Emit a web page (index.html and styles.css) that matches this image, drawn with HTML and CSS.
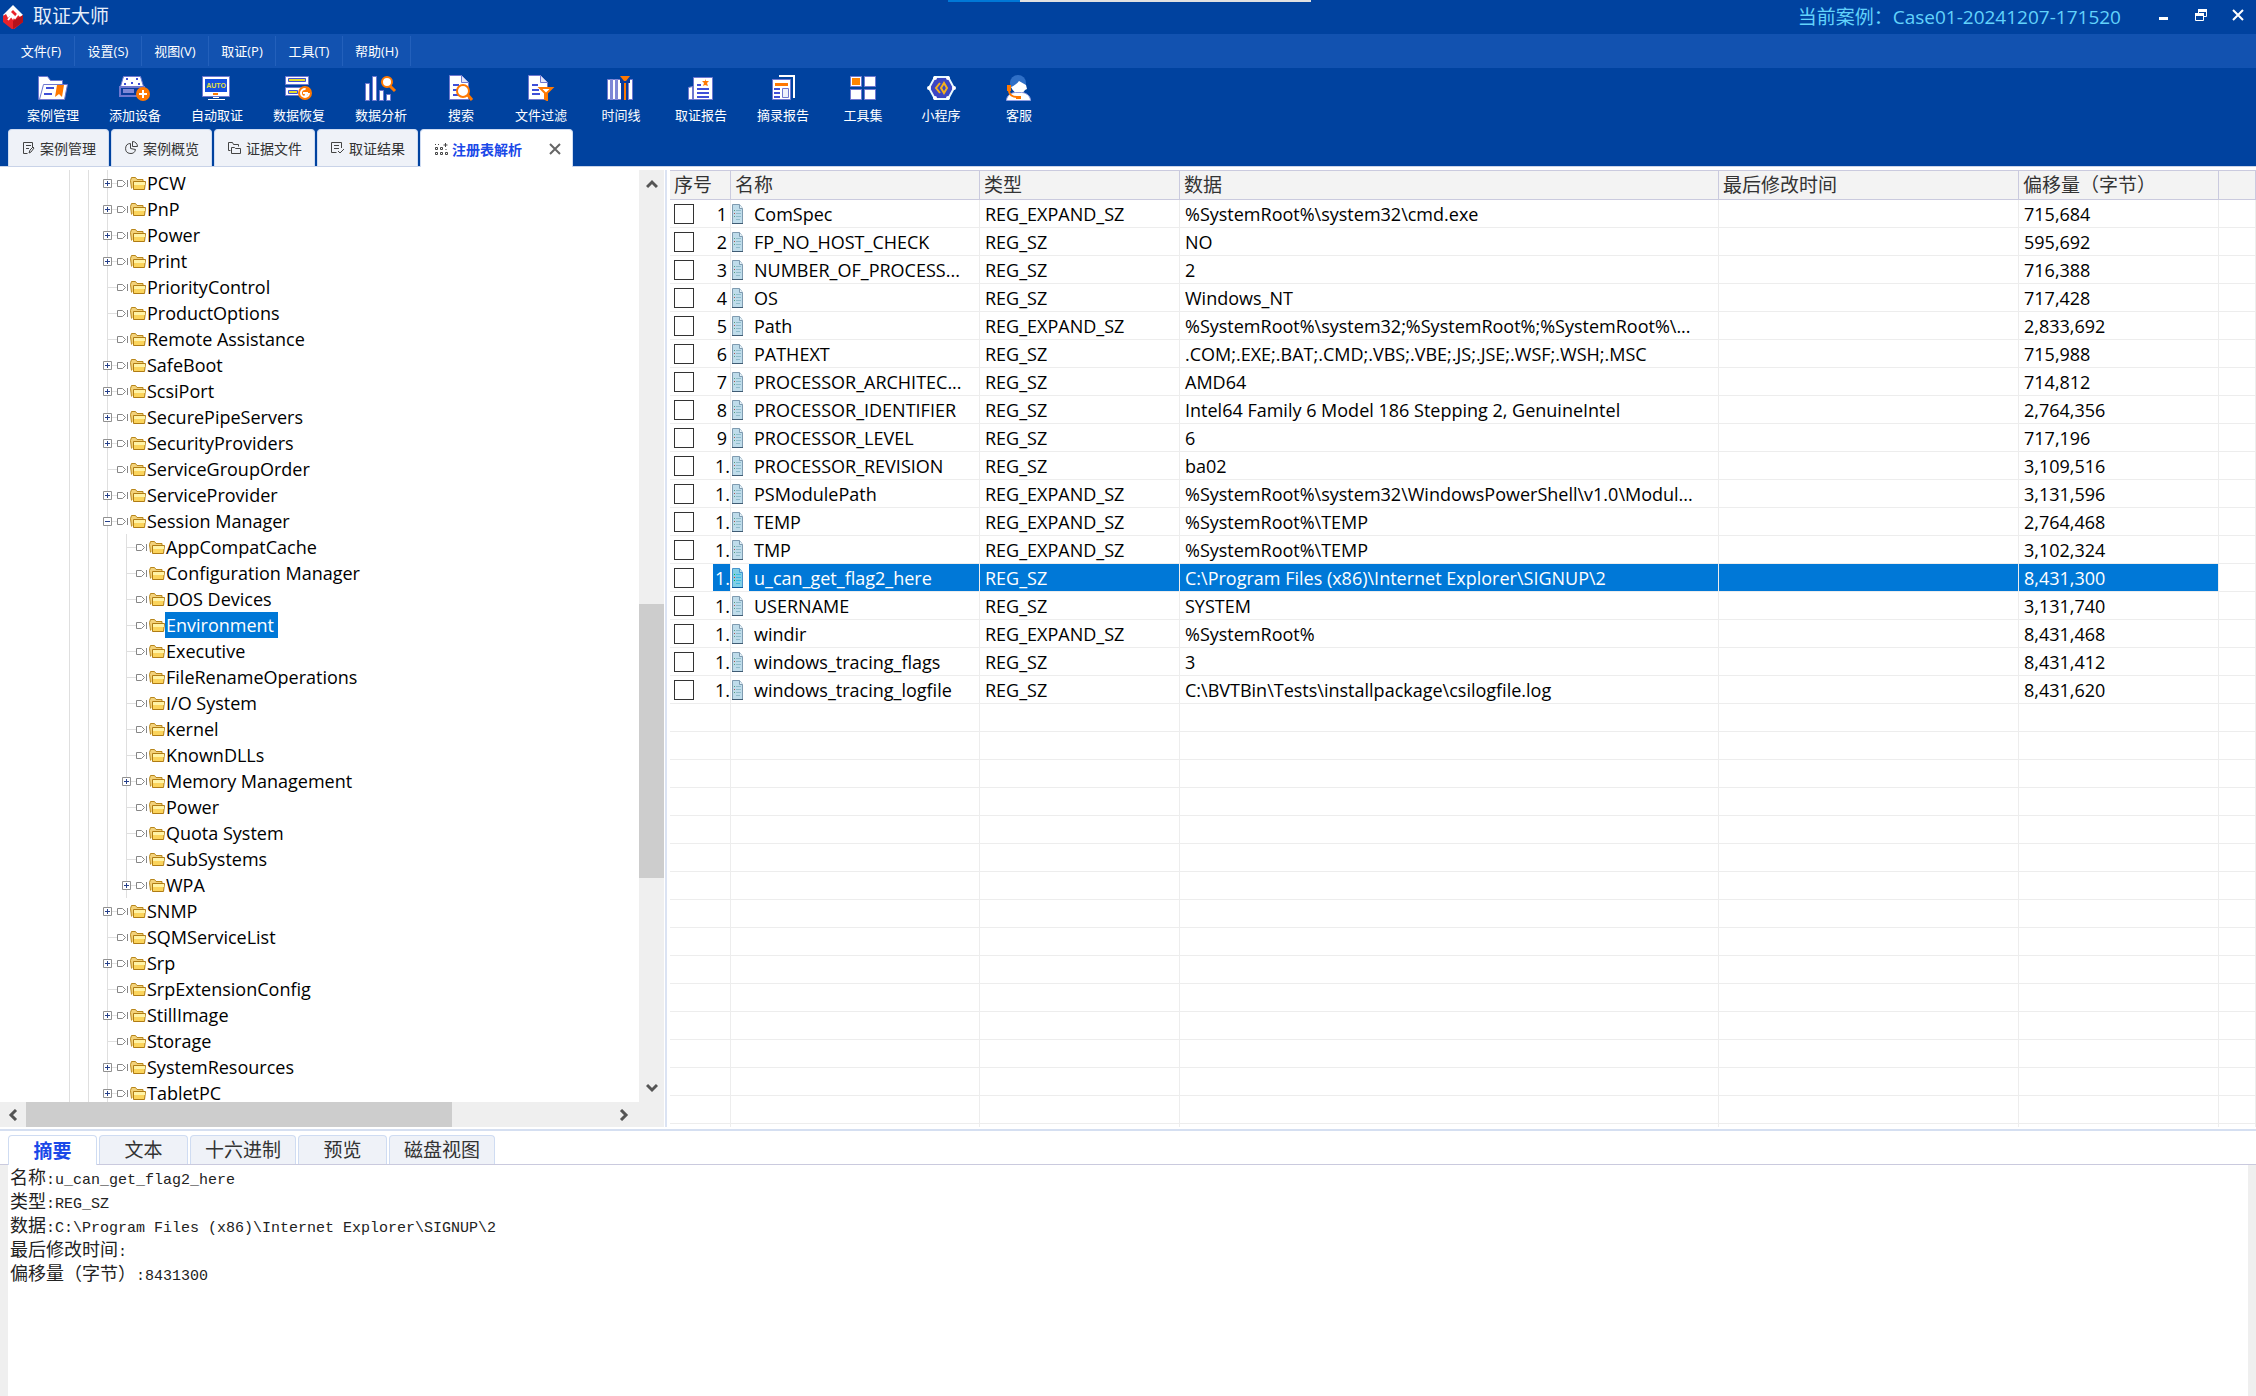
FILE: index.html
```
<!DOCTYPE html>
<html lang="zh-CN">
<head>
    <meta charset="UTF-8">
    <meta name="viewport" content="width=device-width, initial-scale=1.0">
    <title>取证大师</title>
    <link rel="stylesheet" href="styles.css">
</head>
<body>
    <!-- Shared icons -->
    <svg class="sprite" aria-hidden="true">
        <symbol id="i-plus" viewBox="0 0 9 9">
            <path fill="#fff" stroke="#919191" d="M.5.5h8v8h-8z"/>
            <path fill="none" stroke="#26408a" d="M2 4.500h5M4.500 2v5"/>
        </symbol>
        <symbol id="i-minus" viewBox="0 0 9 9">
            <path fill="#fff" stroke="#919191" d="M.5.5h8v8h-8z"/>
            <path fill="none" stroke="#26408a" d="M2 4.500h5"/>
        </symbol>
        <symbol id="i-tag" viewBox="0 0 12 9">
            <path fill="#fff" stroke="#868686" d="M.5 1.500h5l3 3-3 3h-5zM10.500 1v7"/>
        </symbol>
        <symbol id="i-folder" viewBox="0 0 16 14">
            <path fill="#f3d27a" stroke="#b8861b" d="M1.500 12.500L.5 4.500l1-3h4l1.500 2h6v3"/>
            <path fill="#fbd45c" stroke="#b07c14" d="M3.500 5.500h12l-1 8h-11z"/>
            <path fill="#fff3a6" d="M4 6h11v3H4z"/>
        </symbol>
        <symbol id="i-file" viewBox="0 0 14 20">
            <path fill="#bfdcea" stroke="#7f9bb0" d="M1.500.5h7l3 4v15h-10z"/>
            <path fill="#e6f3fa" stroke="#7f9bb0" d="M8.500.5v4h3"/>
            <path stroke="#8fbccb" d="M5 6.500h5M5 9.500h5M5 12.500h5M5 15.500h4"/>
            <path stroke="#54a07a" d="M3 6.500h1M3 12.500h1"/>
            <path stroke="#b0524f" d="M3 9.500h1"/>
            <path fill="#3f5b73" d="M1 19h11v1H1z"/>
        </symbol>
    </svg>

    <header class="titlebar">
        <svg class="logo" viewBox="0 0 20 24">
            <path fill="#fff" d="M10 0l10 10-10 11L0 10z"/>
            <path fill="#e8222a" d="M0 11l3-2 2 4 2-2 3 4 2-4-4-4 2-2 7 7 3-1v6l-10 8L0 17z"/>
            <path fill="#b5121b" d="M10 16l10-6v7l-10 7z"/>
            <path fill="none" stroke="#fff" stroke-width="2" d="M5 15l4-5 3 3 3-4"/>
        </svg>
        <h1>取证大师</h1>
        <span class="case">当前案例：Case01-20241207-171520</span>
        <div class="window-buttons">
            <button type="button" aria-label="最小化"><svg viewBox="0 0 12 12"><path fill="#fff" d="M1 8h9v3H1z"/></svg></button>
            <button type="button" aria-label="还原"><svg viewBox="0 0 12 12"><path fill="none" stroke="#fff" d="M3.500 4V.5h8v7H8"/><path fill="#fff" d="M3 0h9v3H3zM0 4h9v3H0z"/><path fill="none" stroke="#fff" d="M.5 4.500h8v7h-8z"/></svg></button>
            <button type="button" aria-label="关闭"><svg viewBox="0 0 12 12"><path fill="none" stroke="#fff" stroke-width="2" d="M1 1l10 10M11 1L1 11"/></svg></button>
        </div>
        <div class="dock-strip"></div>
    </header>

    <nav class="menubar">
        <button type="button">文件(F)</button>
        <button type="button">设置(S)</button>
        <button type="button">视图(V)</button>
        <button type="button">取证(P)</button>
        <button type="button">工具(T)</button>
        <button type="button">帮助(H)</button>
    </nav>

    <div class="toolbar">
        <button type="button">
            <svg viewBox="0 0 32 26"><path fill="#fff" stroke="#6f78d0" d="M1.500 24.500V1.500h9l3 4h12v5"/><path fill="#fff" stroke="#6f78d0" d="M6.500 9.500h24l-3 15H2.500z"/><path stroke="#3f4fd8" stroke-width="2" d="M9 13h8M7 19h8"/><path fill="#ff7800" d="M20 10h7l-2 12-3-3-4 3z"/></svg>
            案例管理
        </button>
        <button type="button">
            <svg viewBox="0 0 32 26"><path fill="#fff" stroke="#6f78d0" d="M4.500 1.500h17l3 10h-23z"/><path fill="#3f4fd8" d="M7 3h2v2H7zM17 3h2v2h-2zM5 8h2v2H5zM19 8h2v2h-2zM12 7h2v2h-2z"/><path fill="#0b3c9c" stroke="#6f78d0" stroke-width="2" d="M1 12h24v9H1z"/><path fill="#7f88d6" d="M4 14h11v4H4z"/><circle cx="24" cy="19" r="7" fill="#ff7800"/><path stroke="#fff" stroke-width="2" d="M20 19h8M24 15v8"/></svg>
            添加设备
        </button>
        <button type="button">
            <svg viewBox="0 0 32 26"><path fill="#fff" stroke="#6f78d0" d="M1.500 1.500h27v20h-27z"/><path fill="#1450e0" d="M4 4h22v13H4z"/><text class="auto-label" x="15" y="13">AUTO</text><path fill="#ff7800" d="M12 18h5v2h-5z"/><path fill="#fff" d="M12 22h6v1h-6zM7 24h17v1H7z"/></svg>
            自动取证
        </button>
        <button type="button">
            <svg viewBox="0 0 32 26"><path fill="#fff" stroke="#6f78d0" d="M2.500 1.500h23v8h-23zM2.500 12.500h23v8h-23z"/><path fill="#e2dc2c" stroke="#3f4fd8" d="M5.500 3.500h17v3h-17zM5.500 15.500h9v3h-9z"/><circle cx="22" cy="18" r="7" fill="#ff7800"/><circle cx="22" cy="18" r="4" fill="none" stroke="#fff" stroke-width="2" stroke-dasharray="19 6"/><path fill="#fff" d="M20 17h5v2l-2 3h-2l1-3h-2z"/></svg>
            数据恢复
        </button>
        <button type="button">
            <svg viewBox="0 0 32 26"><path fill="#fff" stroke="#6f78d0" d="M.5 8.500h4v17h-4zM7.500 1.500h4v24h-4zM14.500 15.500h4v10h-4zM21.500 19.500h4v6h-4z"/><path stroke="#ff7800" stroke-width="3" d="M25 11l5 5"/><circle cx="22" cy="7" r="5" fill="#fff" stroke="#ff7800" stroke-width="2"/></svg>
            数据分析
        </button>
        <button type="button">
            <svg viewBox="0 0 32 26"><path fill="#fff" stroke="#6f78d0" d="M4.500.5h12l7 7v17h-19z"/><path fill="#e3e6fa" stroke="#6f78d0" d="M16.500.5v7h7"/><path stroke="#3f4fd8" stroke-width="2" d="M8 10h6M8 15h4M8 20h5"/><path stroke="#ff7800" stroke-width="3" d="M22 19l5 6"/><circle cx="18" cy="16" r="6" fill="#fff" stroke="#ff7800" stroke-width="2"/></svg>
            搜索
        </button>
        <button type="button">
            <svg viewBox="0 0 32 26"><path fill="#fff" stroke="#6f78d0" d="M3.500.5h12l7 7v17h-19z"/><path fill="#e3e6fa" stroke="#6f78d0" d="M15.500.5v7h7"/><path stroke="#3f4fd8" stroke-width="2" d="M7 10h6M7 15h7M7 19h8"/><path fill="#fff" stroke="#ff7800" stroke-width="2" d="M15 13h12l-5 5v7l-2-1v-6z"/></svg>
            文件过滤
        </button>
        <button type="button">
            <svg viewBox="0 0 32 26"><path fill="#fff" stroke="#6f78d0" d="M2.500 4.500h25v20h-25z"/><path fill="#7f88d6" d="M5 4h3v21H5zM10 4h3v21h-3zM22 4h2v21h-2z"/><path fill="#0b3c9c" d="M15 3h10v5h-2v17h-7V8h-1z"/><path fill="#ff7800" d="M15 1h10l-4 5h-2zM19 8h2v17h-2z"/></svg>
            时间线
        </button>
        <button type="button">
            <svg viewBox="0 0 32 26"><path fill="#fff" stroke="#6f78d0" d="M3.500 12.500l4-1v13h-4zM8.500 2.500h19v22h-19z"/><path stroke="#3f4fd8" stroke-width="2" d="M12 10h4M12 14h12M12 18h12M12 22h12"/><path fill="#ff7800" d="M20 4l1 2h3l-2 2 1 3-3-1-2 1 1-3-2-2h3z"/></svg>
            取证报告
        </button>
        <button type="button">
            <svg viewBox="0 0 32 26"><path fill="none" stroke="#fff" stroke-width="2" d="M12 1h15v22"/><path fill="#fff" stroke="#6f78d0" d="M5.500 4.500h18v20h-18z"/><path fill="#ff7800" d="M8 8h13v3H8z"/><path stroke="#3f4fd8" stroke-width="2" d="M7 14h6M7 18h6M7 22h6"/><path fill="#eef0fc" stroke="#6f78d0" d="M15.500 13.500h6v9h-6z"/></svg>
            摘录报告
        </button>
        <button type="button">
            <svg viewBox="0 0 32 26"><path fill="#fff" stroke="#6f78d0" d="M3.500 1.500h11v10h-11zM17.500 1.500h11v10h-11zM3.500 14.500h11v10h-11zM17.500 14.500h11v10h-11z"/><path fill="#ff8400" d="M5 3h8v7H5z"/></svg>
            工具集
        </button>
        <button type="button">
            <svg viewBox="0 0 32 26"><path fill="#3b46c4" stroke="#e9fbff" stroke-width="2" d="M4 13l6-11h13l6 11-6 11H10z"/><circle cx="4" cy="13" r="2" fill="#fff"/><circle cx="29" cy="13" r="2" fill="#fff"/><circle cx="10" cy="3" r="2" fill="#fff"/><circle cx="23" cy="3" r="2" fill="#fff"/><circle cx="10" cy="23" r="2" fill="#fff"/><circle cx="23" cy="23" r="2" fill="#fff"/><path fill="none" stroke="#f5b01c" stroke-width="2" d="M15 8l-4 5 4 5M19 8l-3 5 3 5 3-5z"/></svg>
            小程序
        </button>
        <button type="button">
            <svg viewBox="0 0 32 26"><circle cx="15" cy="8" r="8" fill="#2f6fc6"/><path fill="#fff" d="M8 12c3-1 6-3 8-6l7 4 1 4-2 1c-1 2-4 4-6 4s-6-2-8-7z"/><path fill="#fff" stroke="#8f9be0" d="M3.500 25.500c0-5 5-8 9-8h6c4 0 9 3 9 8z"/><path fill="none" stroke="#ff7800" stroke-width="2" d="M6 15c0 5 4 7 8 7"/><path fill="#ff7800" d="M4 10h4v6H4zM13 21h5v3h-5z"/></svg>
            客服
        </button>
    </div>

    <div class="tabs">
        <button type="button" class="tab">
            <svg viewBox="0 0 14 14"><path d="M11.500 6V1.500h-9v11h4M5 4.500h5M5 7.500h3M8 12l1-3 3-3 1 1-3 4z"/></svg>案例管理
        </button>
        <button type="button" class="tab">
            <svg viewBox="0 0 14 14"><path d="M6.500 2.500a5 5 0 1 0 5 6l-5-1zM8.500.5v5h5a5 5 0 0 0-5-5z"/></svg>案例概览
        </button>
        <button type="button" class="tab">
            <svg viewBox="0 0 14 14"><path d="M3.500 9.500h-2v-8h4l1 2h5v2M4.500 6.500h3l1 1h5v5h-9z"/></svg>证据文件
        </button>
        <button type="button" class="tab">
            <svg viewBox="0 0 14 14"><path d="M11.500 7V1.500h-10v10h5M4 4.500h5M4 7.500h5M8 10l2 2 4-4"/></svg>取证结果
        </button>
        <div class="tab active">
            <svg viewBox="0 0 14 14"><path d="M1.500 2v1M4.500 2v1M1.500 5.500h2v2h-2zM6.500 5.500h2v2h-2zM1.500 10.500h2v2h-2zM6.500 10.500h2v2h-2zM11.500 10.500h2v2h-2zM11.500 1v4M9.500 3h4M12 7v1"/></svg>注册表解析
            <button type="button" class="close" aria-label="关闭标签"><svg viewBox="0 0 12 12"><path d="M1 1l10 10M11 1L1 11"/></svg></button>
        </div>
    </div>

    <main class="workspace">
        <section class="tree-pane">
            <ul id="tree" class="tree"></ul>
            <div class="vscroll">
                <svg viewBox="0 0 12 12"><path d="M1 9l5-5 5 5"/></svg>
                <div class="vthumb"></div>
                <svg viewBox="0 0 12 12"><path d="M1 3l5 5 5-5"/></svg>
            </div>
            <div class="hscroll">
                <svg viewBox="0 0 12 12"><path d="M9 1L4 6l5 5"/></svg>
                <div class="hthumb"></div>
                <svg viewBox="0 0 12 12"><path d="M3 1l5 5-5 5"/></svg>
            </div>
            <div class="corner"></div>
        </section>

        <section class="list-pane">
            <table>
                <colgroup>
                    <col class="c-num"><col class="c-name"><col class="c-type"><col class="c-data"><col class="c-time"><col class="c-offset"><col>
                </colgroup>
                <thead>
                    <tr><th>序号</th><th>名称</th><th>类型</th><th>数据</th><th>最后修改时间</th><th>偏移量（字节）</th><th></th></tr>
                </thead>
                <tbody id="rows"></tbody>
            </table>
        </section>
    </main>

    <section class="detail">
        <div class="detail-tabs">
            <button type="button" class="active">摘要</button>
            <button type="button">文本</button>
            <button type="button">十六进制</button>
            <button type="button">预览</button>
            <button type="button">磁盘视图</button>
        </div>
        <div class="detail-body">
            <p>名称<span>:u_can_get_flag2_here</span></p>
            <p>类型<span>:REG_SZ</span></p>
            <p>数据<span>:C:\Program Files (x86)\Internet Explorer\SIGNUP\2</span></p>
            <p>最后修改时间<span>:</span></p>
            <p>偏移量（字节）<span>:8431300</span></p>
        </div>
    </section>

    <script src="script.js"></script>
</body>
</html>
```
FILE: styles.css
```
* {
    box-sizing: border-box;
}

body {
    margin: 0;
    height: 100vh;
    display: flex;
    flex-direction: column;
    overflow: hidden;
    font-family: "Open Sans", "Noto Sans CJK SC", sans-serif;
    font-size: 18px;
    color: #000;
    background-color: #fff;
}

button {
    padding: 0;
    border: none;
    background: none;
    font: inherit;
    color: inherit;
}

svg {
    display: block;
    flex: none;
}

.sprite {
    position: absolute;
    width: 0;
    height: 0;
}

/* Title bar */
.titlebar {
    position: relative;
    flex: none;
    display: flex;
    align-items: center;
    height: 34px;
    padding: 0 12px 0 3px;
    background-color: #00429f;
    color: #e6eefa;
}

.logo {
    width: 20px;
    height: 24px;
    margin-right: 10px;
}

.titlebar h1 {
    margin: 0;
    font-size: 19px;
    font-weight: 400;
    line-height: 32px;
    padding-bottom: 2px;
}

.case {
    margin-left: auto;
    padding-bottom: 2px;
    font-size: 19px;
    color: #62d2fb;
}

.window-buttons {
    display: flex;
    gap: 25px;
    margin-left: 37px;
    padding-bottom: 4px;
}

.window-buttons svg {
    width: 12px;
    height: 12px;
}

.dock-strip {
    position: absolute;
    top: 0;
    left: 42%;
    width: 363px;
    height: 2px;
    background: linear-gradient(to right, #0078d7 72px, #e1e1e1 72px);
}

/* Menu */
.menubar {
    flex: none;
    display: flex;
    height: 34px;
    padding: 2px 0 2px 8px;
    background-color: #1252b0;
    color: #fff;
    font-size: 13px;
}

.menubar button {
    min-width: 67px;
    padding: 0 12px 2px;
    border-right: 1px solid #2360bb;
}

/* Toolbar */
.toolbar {
    flex: none;
    display: flex;
    height: 61px;
    padding: 7px 12px 0;
    background-color: #00429f;
    color: #fff;
    font-size: 13px;
    line-height: 18px;
}

.toolbar button {
    display: flex;
    flex-direction: column;
    align-items: center;
    gap: 5px;
    min-width: 78px;
    padding: 0 15px;
}

.toolbar svg {
    width: 32px;
    height: 26px;
}

.auto-label {
    font-family: "Liberation Sans", sans-serif;
    font-size: 7px;
    font-weight: 700;
    fill: #e8e23a;
    text-anchor: middle;
}

/* Page tabs */
.tabs {
    flex: none;
    display: flex;
    gap: 2px;
    height: 38px;
    padding-left: 8px;
    background-color: #00429f;
    border-bottom: 1px solid #c9d3e8;
    font-size: 14px;
    color: #333;
}

.tab {
    display: flex;
    align-items: center;
    gap: 5px;
    padding: 0 12px;
    background-color: #eff2f8;
    border: 1px solid #cfdcf2;
    border-bottom: none;
    border-radius: 4px 4px 0 0;
}

.tab svg {
    width: 14px;
    height: 14px;
    fill: none;
    stroke: #444;
}

.tab.active {
    gap: 4px;
    margin-bottom: -1px;
    padding: 0 11px 0 13px;
    background-color: #fff;
    font-weight: 700;
    color: #1a48e8;
}

.tab .close {
    margin-left: 23px;
}

.tab .close svg {
    width: 12px;
    height: 12px;
    stroke: #666;
    stroke-width: 2;
}

/* Registry tree */
.workspace {
    flex: 1;
    min-height: 0;
    display: grid;
    grid-template-columns: 667px 1fr;
    padding-top: 3px;
}

.tree-pane {
    min-height: 0;
    display: grid;
    grid-template-columns: 1fr 25px;
    grid-template-rows: minmax(0, 1fr) 25px;
    margin-bottom: 2px;
    padding-right: 1px;
    border-right: 2px solid #dbe3f3;
}

.tree {
    margin: 0;
    padding: 0 0 0 60px;
    list-style: none;
    overflow: hidden;
}

.tree li {
    display: flex;
    align-items: center;
    height: 26px;
}

.guide {
    flex: none;
    width: 19px;
    height: 26px;
    background: linear-gradient(#dfdfdf, #dfdfdf) 9px 0 / 1px 100% no-repeat;
}

.branch {
    flex: none;
    display: flex;
    align-items: center;
    width: 19px;
    height: 26px;
    padding-left: 5px;
    background:
        linear-gradient(#dfdfdf, #dfdfdf) 9px 0 / 1px 100% no-repeat,
        linear-gradient(#dfdfdf, #dfdfdf) 9px 13px / 10px 1px no-repeat;
}

.branch svg {
    width: 9px;
    height: 9px;
}

.tag {
    width: 12px;
    height: 9px;
}

.folder {
    width: 16px;
    height: 14px;
    margin-left: 1px;
}

.tree-label {
    height: 26px;
    padding: 0 4px 0 1px;
    line-height: 26px;
    white-space: pre;
}

.selected .tree-label {
    background-color: #0078d7;
    color: #fff;
}

/* Scroll bars */
.vscroll,
.hscroll {
    display: flex;
    align-items: center;
    background-color: #efefef;
}

.vscroll {
    flex-direction: column;
    padding: 8px 0;
}

.hscroll {
    padding: 0 9px 0 7px;
}

.vscroll svg,
.hscroll svg {
    width: 12px;
    height: 12px;
    fill: none;
    stroke: #555;
    stroke-width: 3;
}

.vthumb {
    width: 25px;
    height: 274px;
    margin: 414px 0 auto;
    background-color: #cdcdcd;
}

.hthumb {
    width: 426px;
    height: 25px;
    margin: 0 auto 0 7px;
    background-color: #cdcdcd;
}

.corner {
    background-color: #efefef;
}

/* Value list */
.list-pane {
    min-width: 0;
    min-height: 0;
    margin: 0 0 2px 3px;
    overflow: hidden;
}

table {
    width: 100%;
    table-layout: fixed;
    border-collapse: separate;
    border-spacing: 0;
}

.c-num { width: 61px; }
.c-name { width: 249px; }
.c-type { width: 200px; }
.c-data { width: 539px; }
.c-time { width: 300px; }
.c-offset { width: 200px; }

th {
    height: 30px;
    padding: 0 4px;
    border: solid #cacade;
    border-width: 1px 1px 1px 0;
    background-color: #f3f3f3;
    font-size: 19px;
    font-weight: 400;
    line-height: 26px;
    text-align: left;
    color: #333;
}

td {
    height: 28px;
    padding: 2px 5px 0;
    border: solid #ededed;
    border-width: 0 1px 1px 0;
    line-height: 25px;
    white-space: nowrap;
}

.num {
    display: flex;
    align-items: center;
    padding-left: 4px;
}

.num input {
    appearance: none;
    width: 20px;
    height: 20px;
    margin: 0;
    border: 1px solid #333;
    background-color: #fff;
}

.num span {
    min-width: 17px;
    height: 27px;
    margin-left: auto;
    padding: 2px 3px 0;
    text-align: right;
}

.num .wide {
    padding: 2px 0 0 2px;
    text-align: left;
}

.num-cell,
.name-cell {
    padding: 0;
}

.name {
    display: flex;
    align-items: center;
}

.name svg {
    width: 14px;
    height: 20px;
    margin-right: 4px;
}

.name span {
    flex: 1;
    padding: 2px 5px 0;
}

.picked td:not(.num-cell):not(.name-cell):not(:last-child),
.picked .num span,
.picked .name span {
    background-color: #0078d7;
    color: #fff;
}

.picked .name svg {
    filter: saturate(3) brightness(0.9);
}

/* Detail panel */
.detail {
    flex: none;
    display: flex;
    flex-direction: column;
    height: 267px;
    border-top: 2px solid #d5dff1;
}

.detail-tabs {
    display: flex;
    gap: 2px;
    height: 34px;
    padding: 4px 8px 0;
    border-bottom: 1px solid #cacade;
}

.detail-tabs button {
    min-width: 89px;
    padding: 0 14px;
    border: 1px solid #cfdcf2;
    border-bottom: none;
    border-radius: 4px 4px 0 0;
    background-color: #eff2f8;
    font-size: 19px;
    line-height: 26px;
    color: #333;
}

.detail-tabs .active {
    margin-bottom: -1px;
    background-color: #fff;
    font-weight: 700;
    color: #1a48e8;
}

.detail-body {
    flex: 1;
    padding: 0 2px;
    border: solid #efefef;
    border-width: 0 8px;
    color: #222;
}

.detail-body p {
    margin: 0;
    line-height: 24px;
}

.detail-body span {
    font-family: "Liberation Mono", monospace;
    font-size: 15px;
    line-height: 1;
}
```
FILE: script.js
```
// level, label, state: "+" collapsed, "-" expanded, "" leaf
const nodes = [
    [1, "PCW", "+"],
    [1, "PnP", "+"],
    [1, "Power", "+"],
    [1, "Print", "+"],
    [1, "PriorityControl", ""],
    [1, "ProductOptions", ""],
    [1, "Remote Assistance", ""],
    [1, "SafeBoot", "+"],
    [1, "ScsiPort", "+"],
    [1, "SecurePipeServers", "+"],
    [1, "SecurityProviders", "+"],
    [1, "ServiceGroupOrder", ""],
    [1, "ServiceProvider", "+"],
    [1, "Session Manager", "-"],
    [2, "AppCompatCache", ""],
    [2, "Configuration Manager", ""],
    [2, "DOS Devices", ""],
    [2, "Environment", ""],
    [2, "Executive", ""],
    [2, "FileRenameOperations", ""],
    [2, "I/O System", ""],
    [2, "kernel", ""],
    [2, "KnownDLLs", ""],
    [2, "Memory Management", "+"],
    [2, "Power", ""],
    [2, "Quota System", ""],
    [2, "SubSystems", ""],
    [2, "WPA", "+"],
    [1, "SNMP", "+"],
    [1, "SQMServiceList", ""],
    [1, "Srp", "+"],
    [1, "SrpExtensionConfig", ""],
    [1, "StillImage", "+"],
    [1, "Storage", ""],
    [1, "SystemResources", "+"],
    [1, "TabletPC", "+"]
];

const values = [
    ["ComSpec", "REG_EXPAND_SZ", "%SystemRoot%\\system32\\cmd.exe", "715,684"],
    ["FP_NO_HOST_CHECK", "REG_SZ", "NO", "595,692"],
    ["NUMBER_OF_PROCESS...", "REG_SZ", "2", "716,388"],
    ["OS", "REG_SZ", "Windows_NT", "717,428"],
    ["Path", "REG_EXPAND_SZ", "%SystemRoot%\\system32;%SystemRoot%;%SystemRoot%\\...", "2,833,692"],
    ["PATHEXT", "REG_SZ", ".COM;.EXE;.BAT;.CMD;.VBS;.VBE;.JS;.JSE;.WSF;.WSH;.MSC", "715,988"],
    ["PROCESSOR_ARCHITEC...", "REG_SZ", "AMD64", "714,812"],
    ["PROCESSOR_IDENTIFIER", "REG_SZ", "Intel64 Family 6 Model 186 Stepping 2, GenuineIntel", "2,764,356"],
    ["PROCESSOR_LEVEL", "REG_SZ", "6", "717,196"],
    ["PROCESSOR_REVISION", "REG_SZ", "ba02", "3,109,516"],
    ["PSModulePath", "REG_EXPAND_SZ", "%SystemRoot%\\system32\\WindowsPowerShell\\v1.0\\Modul...", "3,131,596"],
    ["TEMP", "REG_EXPAND_SZ", "%SystemRoot%\\TEMP", "2,764,468"],
    ["TMP", "REG_EXPAND_SZ", "%SystemRoot%\\TEMP", "3,102,324"],
    ["u_can_get_flag2_here", "REG_SZ", "C:\\Program Files (x86)\\Internet Explorer\\SIGNUP\\2", "8,431,300"],
    ["USERNAME", "REG_SZ", "SYSTEM", "3,131,740"],
    ["windir", "REG_EXPAND_SZ", "%SystemRoot%", "8,431,468"],
    ["windows_tracing_flags", "REG_SZ", "3", "8,431,412"],
    ["windows_tracing_logfile", "REG_SZ", "C:\\BVTBin\\Tests\\installpackage\\csilogfile.log", "8,431,620"]
];

const icons = { "+": "<svg><use href='#i-plus'/></svg>", "-": "<svg><use href='#i-minus'/></svg>", "": "" };

document.getElementById("tree").innerHTML = nodes.map(([level, label, state]) => `
    <li class="${label === "Environment" ? "selected" : ""}">
        ${"<span class='guide'></span>".repeat(level + 1)}
        <span class="branch">${icons[state]}</span>
        <svg class="tag"><use href="#i-tag"/></svg>
        <svg class="folder"><use href="#i-folder"/></svg>
        <span class="tree-label">${label}</span>
    </li>`).join("");

const filled = values.map(([name, type, data, offset], i) => `
    <tr class="${name === "u_can_get_flag2_here" ? "picked" : ""}">
        <td class="num-cell"><div class="num"><input type="checkbox" aria-label="${name}">${i < 9 ? `<span>${i + 1}</span>` : "<span class='wide'>1.</span>"}</div></td>
        <td class="name-cell"><div class="name"><svg><use href="#i-file"/></svg><span>${name}</span></div></td>
        <td>${type}</td><td>${data}</td><td></td><td>${offset}</td><td></td>
    </tr>`).join("");

// empty grid lines below the last value
const blank = "<tr><td></td><td></td><td></td><td></td><td></td><td></td><td></td></tr>".repeat(16);

document.getElementById("rows").innerHTML = filled + blank;
```
